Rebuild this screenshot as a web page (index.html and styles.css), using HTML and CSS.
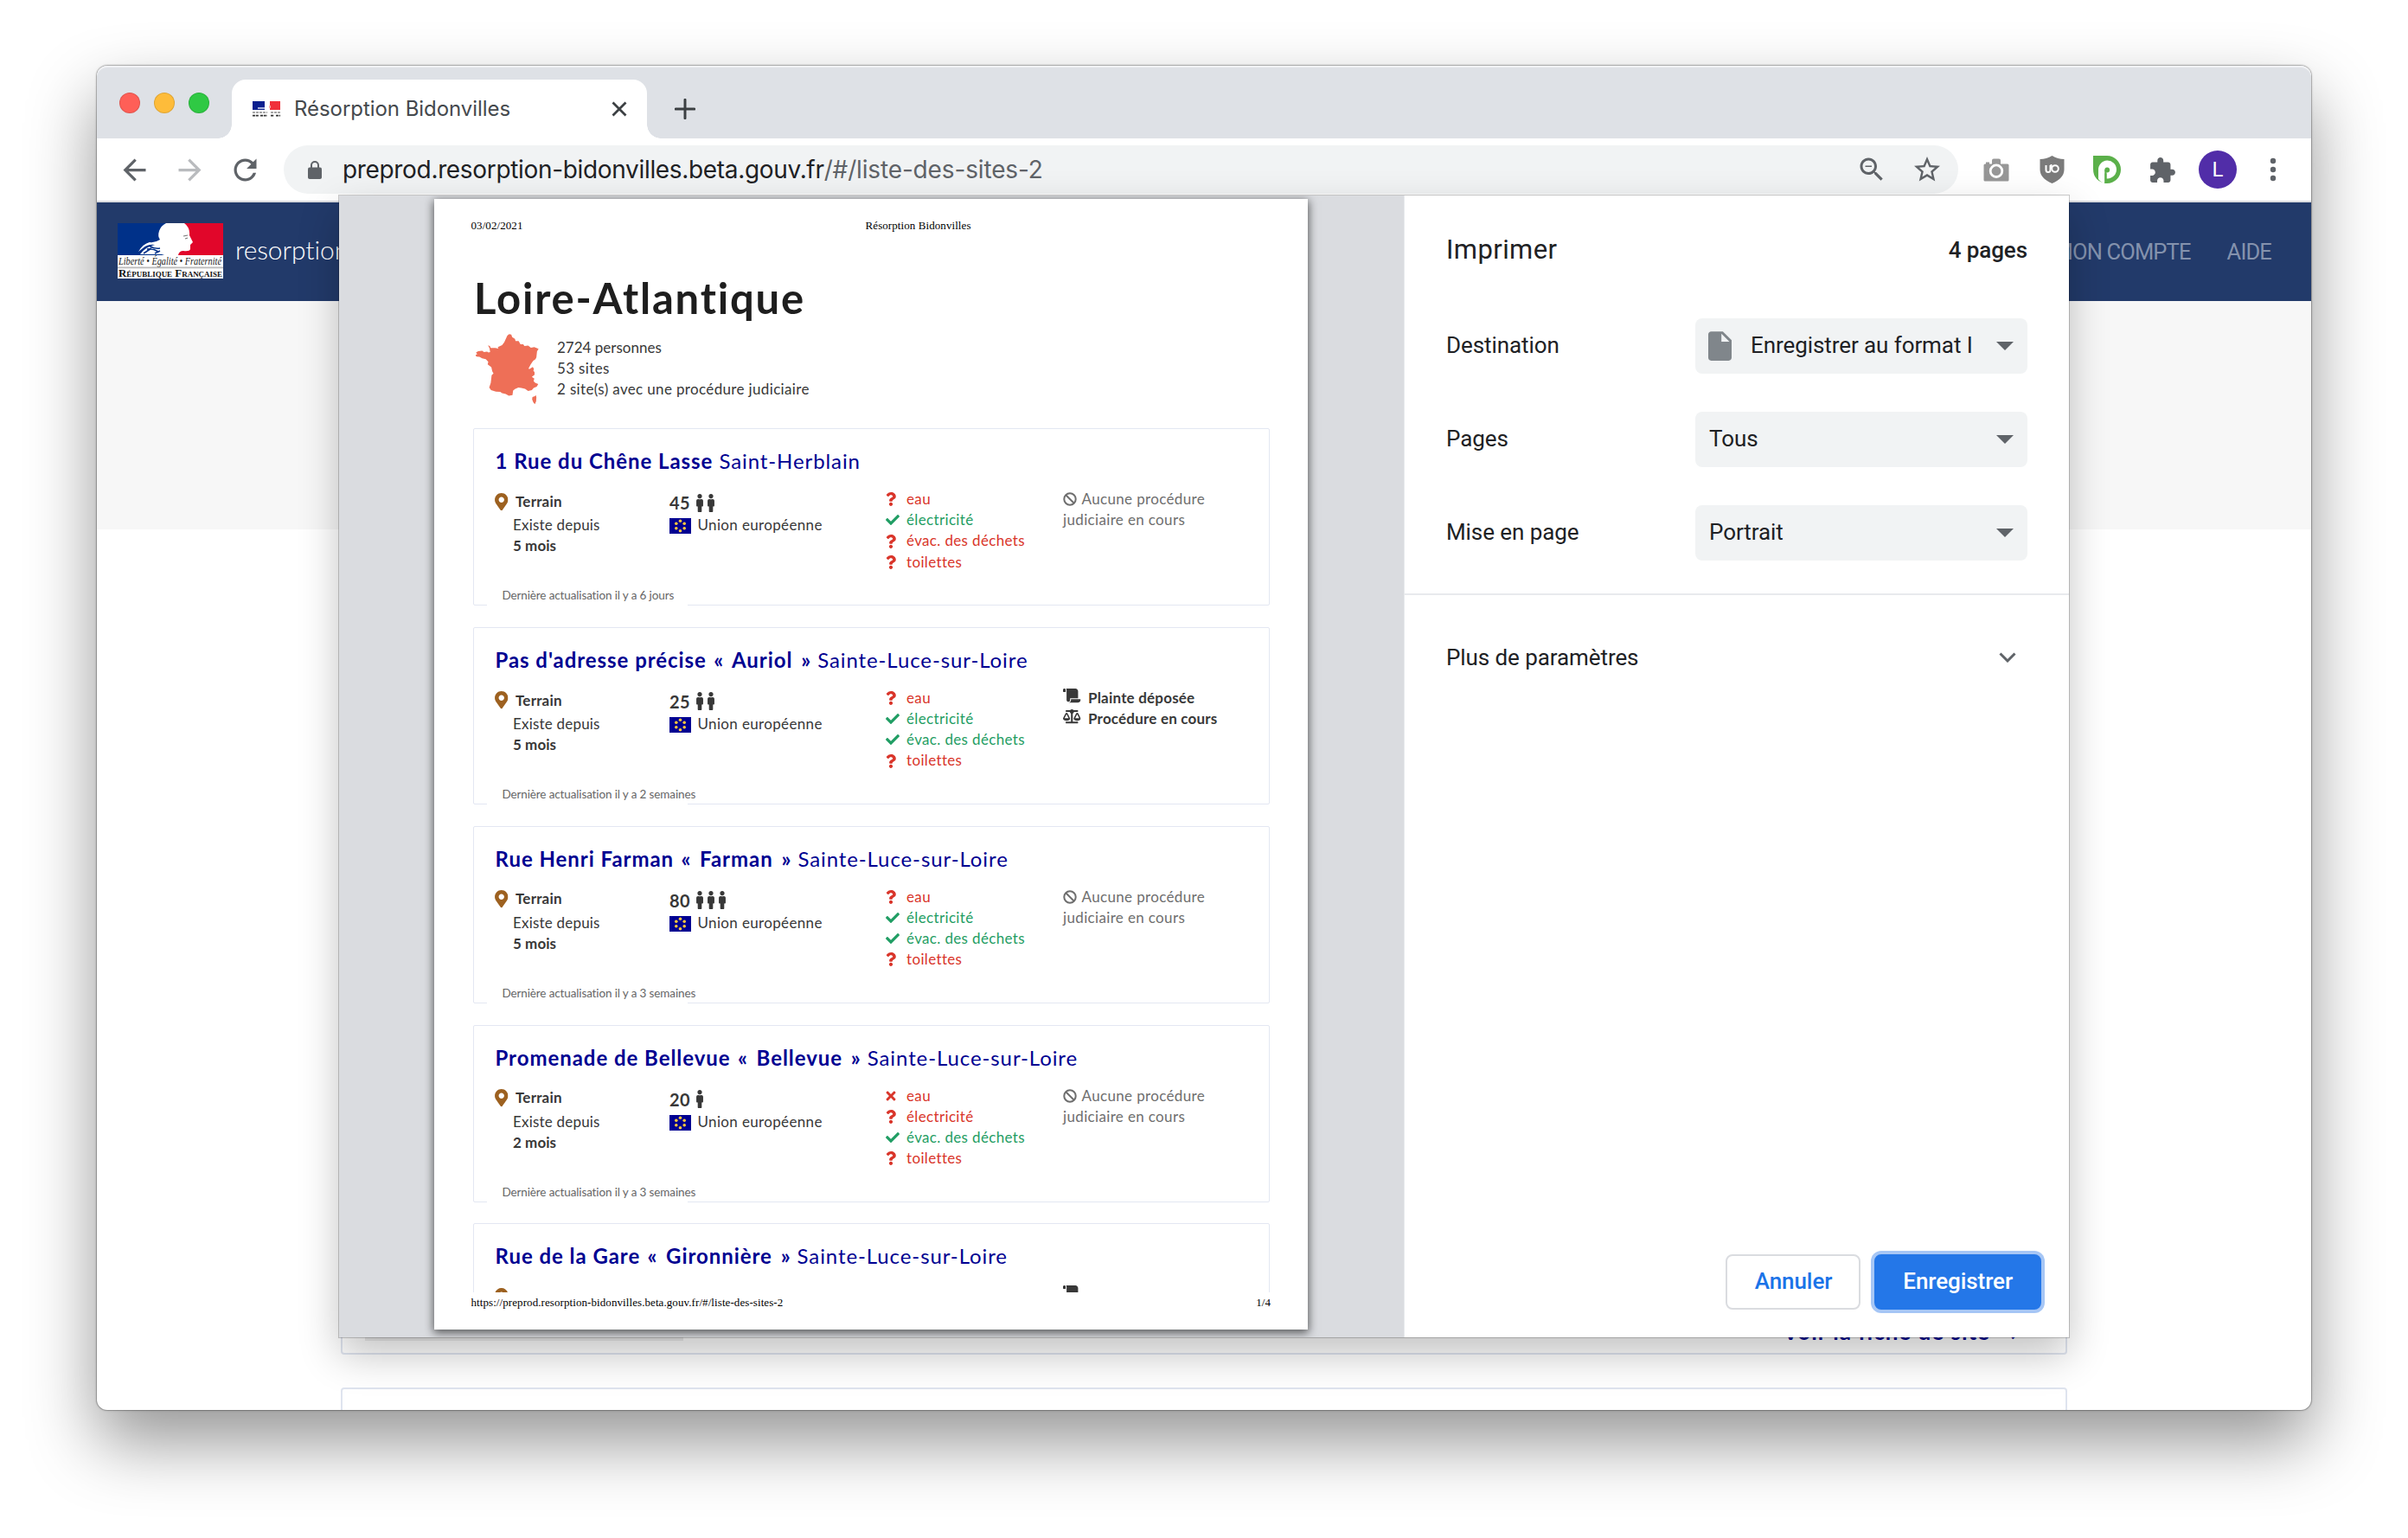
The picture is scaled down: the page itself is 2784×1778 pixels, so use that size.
FILE: index.html
```html
<!DOCTYPE html>
<html lang="fr">
<head>
<meta charset="utf-8">
<title>Résorption Bidonvilles</title>
<link rel="stylesheet" href="styles.css">
</head>
<body>
<svg class="sprite" aria-hidden="true">
  <symbol id="question" viewBox="0 0 384 512"><path d="M202.021 0C122.202 0 70.503 32.703 29.914 91.026c-7.363 10.58-5.093 25.086 5.178 32.874l43.138 32.709c10.373 7.865 25.132 6.026 33.253-4.148 25.049-31.381 43.63-49.449 82.757-49.449 30.764 0 68.816 19.799 68.816 49.631 0 22.552-18.617 34.134-48.993 51.164-35.423 19.86-82.299 44.576-82.299 106.405V320c0 13.255 10.745 24 24 24h72.471c13.255 0 24-10.745 24-24v-5.773c0-42.86 125.268-44.645 125.268-160.627C377.504 66.256 286.902 0 202.021 0zM192 373.459c-38.196 0-69.271 31.075-69.271 69.271 0 38.195 31.075 69.27 69.271 69.27s69.271-31.075 69.271-69.271-31.075-69.27-69.271-69.27z"/></symbol>
  <symbol id="check" viewBox="0 0 512 512"><path d="M173.898 439.404l-166.4-166.4c-9.997-9.997-9.997-26.206 0-36.204l36.203-36.204c9.997-9.998 26.207-9.998 36.204 0L192 312.69 432.095 72.596c9.997-9.997 26.207-9.997 36.204 0l36.203 36.204c9.997 9.997 9.997 26.206 0 36.204l-294.4 294.401c-9.998 9.997-26.207 9.997-36.204-.001z"/></symbol>
  <symbol id="times" viewBox="0 0 352 512"><path d="M242.72 256l100.07-100.07c12.28-12.28 12.28-32.19 0-44.48l-22.24-22.24c-12.28-12.28-32.19-12.28-44.48 0L176 189.28 75.93 89.21c-12.28-12.28-32.19-12.28-44.48 0L9.21 111.45c-12.28 12.28-12.28 32.19 0 44.48L109.28 256 9.21 356.07c-12.28 12.28-12.28 32.19 0 44.48l22.24 22.24c12.28 12.28 32.2 12.28 44.48 0L176 322.72l100.07 100.07c12.28 12.28 32.2 12.28 44.48 0l22.24-22.24c12.28-12.28 12.28-32.19 0-44.48L242.72 256z"/></symbol>
  <symbol id="ban" viewBox="0 0 512 512"><circle cx="256" cy="256" r="215" fill="none" stroke="currentColor" stroke-width="64"/><path d="M104 104l304 304" stroke="currentColor" stroke-width="64"/></symbol>
  <symbol id="pin" viewBox="0 0 384 512"><path d="M172.268 501.67C26.97 291.031 0 269.413 0 192 0 85.961 85.961 0 192 0s192 85.961 192 192c0 77.413-26.97 99.031-172.268 309.67-9.535 13.774-29.93 13.773-39.464 0zM192 272c44.183 0 80-35.817 80-80s-35.817-80-80-80-80 35.817-80 80 35.817 80 80 80z"/></symbol>
  <symbol id="male" viewBox="0 0 192 512"><path d="M96 0c35.346 0 64 28.654 64 64s-28.654 64-64 64-64-28.654-64-64S60.654 0 96 0m48 144h-11.36c-22.711 10.443-49.59 10.894-73.28 0H48c-26.51 0-48 21.49-48 48v136c0 13.255 10.745 24 24 24h16v136c0 13.255 10.745 24 24 24h64c13.255 0 24-10.745 24-24V352h16c13.255 0 24-10.745 24-24V192c0-26.51-21.49-48-48-48z"/></symbol>
  <symbol id="scroll" viewBox="0 0 640 512"><path d="M48 0C21.53 0 0 21.53 0 48v64c0 8.84 7.16 16 16 16h80V48C96 21.53 74.47 0 48 0zm208 412.57V352h288V96c0-52.94-43.06-96-96-96H111.59C121.74 13.41 128 29.92 128 48v368c0 38.87 34.65 69.65 74.75 63.12C234.22 474 256 444.46 256 412.57zM288 384v32c0 52.93-43.06 96-96 96h336c61.86 0 112-50.14 112-112 0-8.84-7.16-16-16-16H288z"/></symbol>
  <symbol id="balance" viewBox="0 0 640 512"><path d="M256 336h-.02c0-16.18 1.34-8.73-85.05-181.51-17.65-35.29-68.19-35.36-85.87 0C-2.06 328.75.02 320.33.02 336H0c0 44.18 57.31 80 128 80s128-35.82 128-80zM128 176l72 144H56l72-144zm511.98 160c0-16.18 1.34-8.73-85.05-181.51-17.65-35.29-68.19-35.36-85.87 0-87.12 174.26-85.04 165.84-85.04 181.51H384c0 44.18 57.31 80 128 80s128-35.82 128-80h-.02zM440 320l72-144 72 144H440zm88 128H352V153.25c23.51-10.29 41.16-31.48 46.39-57.25H528c8.84 0 16-7.16 16-16V48c0-8.84-7.16-16-16-16H383.64C369.04 12.68 346.09 0 320 0s-49.04 12.68-63.64 32H112c-8.84 0-16 7.16-16 16v32c0 8.84 7.16 16 16 16h129.61c5.23 25.76 22.87 46.96 46.39 57.25V448H112c-8.84 0-16 7.16-16 16v32c0 8.84 7.16 16 16 16h416c8.84 0 16-7.16 16-16v-32c0-8.84-7.16-16-16-16z"/></symbol>
  <symbol id="eu" viewBox="0 0 25 18"><rect width="25" height="18" fill="#000091"/><g fill="#ffc83d"><circle cx="12.5" cy="3.3" r="1.8"/><circle cx="12.5" cy="14.7" r="1.8"/><circle cx="7.8" cy="6.2" r="1.8"/><circle cx="17.2" cy="6.2" r="1.8"/><circle cx="7.8" cy="11.8" r="1.8"/><circle cx="17.2" cy="11.8" r="1.8"/></g></symbol>
</svg>

<div class="window">
  <div class="tabstrip">
    <div class="lights"><i class="light red"></i><i class="light yellow"></i><i class="light green"></i></div>
    <div class="tab">
      <svg class="favicon" viewBox="0 0 32 18"><rect width="32" height="18" fill="#fff"/><rect width="14" height="10" fill="#0b1f8f"/><rect x="20" width="12" height="10" fill="#f0303a"/><path d="M6 7h8v2H6z" fill="#aab2dc"/><path d="M19 5h2v3h-2z" fill="#f7a5a8"/><path d="M0 13h17M21 13h11" stroke="#888" stroke-width="1.5" stroke-dasharray="3 1"/><path d="M0 16.7h7M9 16.7h8M21 16.7h4M27 16.7h5" stroke="#333" stroke-width="1.8" stroke-dasharray="3 .8"/></svg>
      <span class="tab-title">Résorption Bidonvilles</span>
      <svg class="tab-close" viewBox="0 0 18 18"><path d="M1.5 1.5l15 15M16.5 1.5l-15 15" stroke="#3c4043" stroke-width="2.8"/></svg>
    </div>
    <svg class="new-tab" viewBox="0 0 24 24"><path d="M12 1.3v21.4M1.3 12h21.4" stroke="#3c4043" stroke-width="3" stroke-linecap="round"/></svg>
  </div>

  <div class="toolbar">
    <svg class="nav-icon" viewBox="0 0 24 24"><path d="M20 11H7.83l5.59-5.59L12 4l-8 8 8 8 1.41-1.41L7.83 13H20v-2z"/></svg>
    <svg class="nav-icon faded" viewBox="0 0 24 24"><path d="M4 11h12.17l-5.59-5.59L12 4l8 8-8 8-1.41-1.41L16.17 13H4v-2z"/></svg>
    <svg class="nav-icon" viewBox="0 0 24 24"><path d="M17.65 6.35C16.2 4.9 14.21 4 12 4c-4.42 0-7.99 3.58-7.99 8s3.57 8 7.99 8c3.73 0 6.84-2.55 7.73-6h-2.08c-.82 2.33-3.04 4-5.65 4-3.31 0-6-2.69-6-6s2.69-6 6-6c1.66 0 3.14.69 4.22 1.78L13 11h7V4l-2.35 2.35z"/></svg>
    <div class="omnibox">
      <svg class="lock" viewBox="4 1 16 21"><path d="M18 8.5H6a2 2 0 0 0-2 2V20c0 1.1.9 2 2 2h12c1.100 0 2-.9 2-2v-9.500a2 2 0 0 0-2-2z"/><path d="M8 9V6a4 4 0 0 1 8 0v3" fill="none" stroke="#5f6368" stroke-width="2"/></svg>
      <div class="url"><span class="domain">preprod.resorption-bidonvilles.beta.gouv.fr</span><span class="path">/#/liste-des-sites-2</span></div>
      <div class="slot"><svg class="i36" viewBox="0 0 24 24"><path d="M15.500 14h-.79l-.28-.27C15.410 12.590 16 11.110 16 9.500 16 5.910 13.090 3 9.500 3S3 5.910 3 9.500 5.910 16 9.500 16c1.610 0 3.090-.59 4.230-1.570l.27.28v.79l5 4.990L20.490 19l-4.990-5zm-6 0C7.010 14 5 11.990 5 9.500S7.010 5 9.500 5 14 7.010 14 9.500 11.990 14 9.500 14zM7 9h5v1H7z"/></svg></div>
      <div class="slot"><svg class="i36" viewBox="0 0 24 24"><path d="M22 9.240l-7.190-.62L12 2 9.190 8.630 2 9.240l5.460 4.730L5.820 21 12 17.270 18.180 21l-1.630-7.030L22 9.240zM12 15.400l-3.760 2.270 1-4.280-3.320-2.880 4.380-.38L12 6.100l1.710 4.040 4.380.38-3.320 2.880 1 4.280L12 15.400z"/></svg></div>
    </div>
    <div class="extensions">
      <div class="slot"><svg width="30" height="27" viewBox="0 0 30 27"><path fill="#979797" d="M3 6.500V4.500h4v2h3V2.500Q10 .5 12 .5h6q2 0 2 2v4h8q1.500 0 1.500 1.500v17q0 1.500-1.500 1.500H2Q.5 26.500.5 25V8Q.5 6.500 2 6.500z"/><circle cx="15" cy="14.700" r="6.800" fill="none" stroke="#fff" stroke-width="2.800"/></svg></div>
      <div class="slot"><svg width="29" height="32" viewBox="0 0 29 32"><path fill="#7b7b7b" d="M14.500 0Q21 4 28.500 4v12q0 10-14 16Q.5 26 .5 16V4Q8 4 14.500 0z"/><path d="M7.500 11v5.500a2.500 2.500 0 0 0 5 0V11" fill="none" stroke="#fff" stroke-width="2"/><circle cx="18" cy="15" r="3.800" fill="none" stroke="#fff" stroke-width="2"/><path d="M13.500 10v5" stroke="#fff" stroke-width="2"/></svg></div>
      <div class="slot"><svg width="32" height="32" viewBox="0 0 32 32"><path fill="#5bb04a" d="M0 0h16a16 16 0 0 1 0 32h-3V0z"/><path fill="#5bb04a" d="M0 0h16v32Q0 30 0 15z"/><path fill="#fff" d="M6 27V16.500a10.500 10.500 0 1 1 10.500 10h-1V20.500h-2V32Q9 31 6 27z"/><circle cx="16.200" cy="16.500" r="2.900" fill="#5bb04a"/><path fill="#5bb04a" d="M13.300 16.500h2.200V32h-2.200z"/></svg></div>
      <div class="slot"><svg class="i33" viewBox="0.500 -.5 24 24"><path d="M20.500 11H19V7c0-1.100-.9-2-2-2h-4V3.500C13 2.120 11.880 1 10.500 1S8 2.120 8 3.500V5H4c-1.100 0-1.990.9-1.990 2v3.800H3.500c1.490 0 2.700 1.210 2.700 2.700s-1.210 2.700-2.700 2.700H2V20c0 1.100.9 2 2 2h3.800v-1.500c0-1.490 1.210-2.700 2.700-2.700 1.490 0 2.700 1.210 2.700 2.700V22H17c1.100 0 2-.9 2-2v-4h1.500c1.380 0 2.500-1.120 2.500-2.500S21.880 11 20.500 11z"/></svg></div>
      <div class="slot"><span class="avatar">L</span></div>
      <div class="slot"><svg width="8" height="28" viewBox="0 0 8 28"><circle cx="4" cy="4" r="3.200"/><circle cx="4" cy="14" r="3.200"/><circle cx="4" cy="24" r="3.200"/></svg></div>
    </div>
  </div>

  <div class="site-nav">
    <svg class="rf-logo" viewBox="0 0 122 64">
      <rect width="122" height="64" fill="#fff"/>
      <path fill="#003189" d="M0 0h56q-6 3-8 9-2 6 1 10-6 4-12 3-8 2-13 11l5-4q6-5 14-4-12 3-17 11h28l-3 1H0z"/>
      <path fill="#e1062a" d="M77 0h45v37H70q1-5 6-5 7 1 8-2v-5l3-3-4-8q1-9-6-14z"/>
      <path fill="none" stroke="#003189" stroke-width="1.600" d="M34 30q7-1 13 3M36 26q6 4 13 3M30 35l9-6M43 35l6-3"/>
      <path fill="none" stroke="#777" stroke-width="1.200" d="M76 15l5-1M78 18l3-1"/>
      <text x="1" y="48" class="rf-motto" textLength="119" lengthAdjust="spacingAndGlyphs">Liberté • Égalité • Fraternité</text>
      <rect y="50.500" width="122" height="1.800" fill="#bbb"/>
      <text x="1" y="62" class="rf-name" textLength="120" lengthAdjust="spacingAndGlyphs">République Française</text>
    </svg>
    <span class="site-name">resorption-bidonvilles</span>
    <div class="site-links"><span>MON COMPTE</span><span>AIDE</span></div>
  </div>

  <div class="page">
    <div class="hero"></div>
    <div class="page-card first"><span class="band">Dernière actualisation il y a 6 jours</span><span class="more">Voir la fiche de site<span class="arrow">→</span></span></div>
    <div class="page-card"></div>
  </div>

  <div class="dialog">
    <div class="preview">
      <div class="paper">
        <div class="paper-head"><span>03/02/2021</span><span>Résorption Bidonvilles</span></div>
        <div class="doc">
          <h1>Loire-Atlantique</h1>
          <div class="summary">
            <svg class="france" viewBox="165 497 206 247" preserveAspectRatio="none"><path d="M268 503l6-5 7 1 3 9 9 6 2 8 10 0 6 11 9 0 4 6 12-1 9 7 11-2 14 6-5 9-2 20-3 7-8 6-8 13-7 14 4 1 10-7 4 7-2 6 4 5 0 9-9 8 8 5-2 10 5 5 10 5-5 9-10 4-6 8-12 3-10-8-12-3-10-1-11 5-6 5-2 16-12 2-10-6-12-3-6-4-14-1-16-5-6-9 5-16 3-27 6-6-4-8-3-14-12-10 2-9-8-9-12-3-9-5-9-1-5-5 7-3-4-6 7-5 13-1 6 4 10-1 5 3 5-2-2-13-5-10 6 2 3 7 15 0 10 2-2-5 14-7 7-10zM361 710l2 8-1 14-4 10-5-6-4-11 1-8 8-3z"/></svg>
            <div class="lines"><div class="total">2724 personnes</div><div>53 sites</div><div>2 site(s) avec une procédure judiciaire</div></div>
          </div>

          <div class="card">
            <h2><b>1 Rue du Chêne Lasse</b> Saint-Herblain</h2>
            <div class="cols">
              <div class="place"><div class="kind"><svg><use href="#pin"/></svg>Terrain</div><div>Existe depuis</div><div><b>5 mois</b></div></div>
              <div class="people"><div class="count">45<svg><use href="#male"/></svg><svg><use href="#male"/></svg></div><div class="origin"><svg><use href="#eu"/></svg>Union européenne</div></div>
              <ul class="services"><li class="no"><svg class="q"><use href="#question"/></svg>eau</li><li class="yes"><svg><use href="#check"/></svg>électricité</li><li class="no"><svg class="q"><use href="#question"/></svg>évac. des déchets</li><li class="no"><svg class="q"><use href="#question"/></svg>toilettes</li></ul>
              <div class="justice none"><div><svg><use href="#ban"/></svg>Aucune procédure</div><div>judiciaire en cours</div></div>
            </div>
            <div class="updated">Dernière actualisation il y a 6 jours</div>
          </div>

          <div class="card">
            <h2><b>Pas d'adresse précise <span class="alias">« Auriol »</span></b> Sainte-Luce-sur-Loire</h2>
            <div class="cols">
              <div class="place"><div class="kind"><svg><use href="#pin"/></svg>Terrain</div><div>Existe depuis</div><div><b>5 mois</b></div></div>
              <div class="people"><div class="count">25<svg><use href="#male"/></svg><svg><use href="#male"/></svg></div><div class="origin"><svg><use href="#eu"/></svg>Union européenne</div></div>
              <ul class="services"><li class="no"><svg class="q"><use href="#question"/></svg>eau</li><li class="yes"><svg><use href="#check"/></svg>électricité</li><li class="yes"><svg><use href="#check"/></svg>évac. des déchets</li><li class="no"><svg class="q"><use href="#question"/></svg>toilettes</li></ul>
              <div class="justice open"><div><svg><use href="#scroll"/></svg>Plainte déposée</div><div><svg><use href="#balance"/></svg>Procédure en cours</div></div>
            </div>
            <div class="updated">Dernière actualisation il y a 2 semaines</div>
          </div>

          <div class="card">
            <h2><b>Rue Henri Farman <span class="alias">« Farman »</span></b> Sainte-Luce-sur-Loire</h2>
            <div class="cols">
              <div class="place"><div class="kind"><svg><use href="#pin"/></svg>Terrain</div><div>Existe depuis</div><div><b>5 mois</b></div></div>
              <div class="people"><div class="count">80<svg><use href="#male"/></svg><svg><use href="#male"/></svg><svg><use href="#male"/></svg></div><div class="origin"><svg><use href="#eu"/></svg>Union européenne</div></div>
              <ul class="services"><li class="no"><svg class="q"><use href="#question"/></svg>eau</li><li class="yes"><svg><use href="#check"/></svg>électricité</li><li class="yes"><svg><use href="#check"/></svg>évac. des déchets</li><li class="no"><svg class="q"><use href="#question"/></svg>toilettes</li></ul>
              <div class="justice none"><div><svg><use href="#ban"/></svg>Aucune procédure</div><div>judiciaire en cours</div></div>
            </div>
            <div class="updated">Dernière actualisation il y a 3 semaines</div>
          </div>

          <div class="card">
            <h2><b>Promenade de Bellevue <span class="alias">« Bellevue »</span></b> Sainte-Luce-sur-Loire</h2>
            <div class="cols">
              <div class="place"><div class="kind"><svg><use href="#pin"/></svg>Terrain</div><div>Existe depuis</div><div><b>2 mois</b></div></div>
              <div class="people"><div class="count">20<svg><use href="#male"/></svg></div><div class="origin"><svg><use href="#eu"/></svg>Union européenne</div></div>
              <ul class="services"><li class="no"><svg class="q"><use href="#times"/></svg>eau</li><li class="no"><svg class="q"><use href="#question"/></svg>électricité</li><li class="yes"><svg><use href="#check"/></svg>évac. des déchets</li><li class="no"><svg class="q"><use href="#question"/></svg>toilettes</li></ul>
              <div class="justice none"><div><svg><use href="#ban"/></svg>Aucune procédure</div><div>judiciaire en cours</div></div>
            </div>
            <div class="updated">Dernière actualisation il y a 3 semaines</div>
          </div>

          <div class="card">
            <h2><b>Rue de la Gare <span class="alias">« Gironnière »</span></b> Sainte-Luce-sur-Loire</h2>
            <div class="cols">
              <div class="place"><div class="kind"><svg><use href="#pin"/></svg></div></div>
              <div></div>
              <div></div>
              <div class="justice open"><div><svg><use href="#scroll"/></svg></div></div>
            </div>
          </div>
        </div>
        <div class="paper-foot"><span>https://preprod.resorption-bidonvilles.beta.gouv.fr/#/liste-des-sites-2</span><span>1/4</span></div>
      </div>
    </div>

    <div class="panel">
      <div class="panel-head"><span class="panel-title">Imprimer</span><span class="panel-count">4 pages</span></div>
      <div class="settings">
        <div class="setting"><span class="label">Destination</span><div class="select"><svg class="file" viewBox="4 2 16 20"><path d="M6 2c-1.100 0-1.990.9-1.990 2L4 20c0 1.100.89 2 1.990 2H18c1.100 0 2-.9 2-2V8l-6-6H6zm7 7V3.500L18.500 9H13z"/></svg><span class="value">Enregistrer au format I</span><i class="caret"></i></div></div>
        <div class="setting"><span class="label">Pages</span><div class="select"><span class="value">Tous</span><i class="caret"></i></div></div>
        <div class="setting"><span class="label">Mise en page</span><div class="select"><span class="value">Portrait</span><i class="caret"></i></div></div>
      </div>
      <div class="more-settings"><span>Plus de paramètres</span><svg width="20" height="12" viewBox="0 0 20 12"><path d="M1.500 1.500l8.500 8.500 8.500-8.500" fill="none" stroke="#5f6368" stroke-width="3"/></svg></div>
      <div class="actions"><span class="button">Annuler</span><span class="button primary">Enregistrer</span></div>
    </div>
  </div>
</div>
</body>
</html>
```
FILE: styles.css
```css
* { box-sizing: border-box; }
body {
  margin: 0;
  padding: 76px 112px 0;
  height: 1778px;
  overflow: hidden;
  background: #fff;
  font-family: Lato, sans-serif;
}
svg { display: block; flex: none; }
.sprite { position: absolute; width: 0; height: 0; }

.window {
  position: relative;
  display: flex;
  flex-direction: column;
  width: 2560px;
  height: 1554px;
  border-radius: 12px;
  background: #fff;
  box-shadow: 0 0 0 1px rgba(0, 0, 0, .17), 0 0 3px rgba(0, 0, 0, .35), 0 37px 79px rgba(0, 0, 0, .42);
}

/* Tab strip */
.tabstrip {
  display: flex;
  height: 84px;
  padding: 16px 0 0 26px;
  background: #dee1e6;
  border-radius: 12px 12px 0 0;
  box-shadow: inset 0 2px 1px rgba(255, 255, 255, .6);
}
.lights { display: flex; gap: 16px; padding-top: 15px; width: 130px; }
.light { width: 24px; height: 24px; border-radius: 50%; border: 1px solid rgba(0, 0, 0, .12); }
.red { background: #ff5f57; }
.yellow { background: #febc3a; }
.green { background: #2fc944; }
.tab {
  position: relative;
  display: flex;
  align-items: center;
  width: 480px;
  height: 68px;
  padding: 0 23px 0 24px;
  background: #fff;
  border-radius: 16px 16px 0 0;
}
.tab::before, .tab::after {
  content: "";
  position: absolute;
  bottom: 0;
  width: 16px;
  height: 16px;
}
.tab::before { left: -16px; background: radial-gradient(circle at 0 0, transparent 15.500px, #fff 16px); }
.tab::after { right: -16px; background: radial-gradient(circle at 100% 0, transparent 15.500px, #fff 16px); }
.favicon { width: 32px; height: 18px; }
.tab-title {
  flex: 1;
  margin-left: 16px;
  font: 24px/30px Inter, sans-serif;
  letter-spacing: -.05px;
  color: #45494d;
}
.tab-close { width: 18px; height: 18px; }
.new-tab { width: 24px; height: 24px; margin: 22px 0 0 32px; }

/* Toolbar */
.toolbar {
  display: flex;
  align-items: center;
  gap: 25px;
  height: 74px;
  padding-left: 24px;
  border-bottom: 2px solid #dadce0;
  background: #fff;
  fill: #5f6368;
}
.nav-icon { width: 39px; height: 39px; }
.faded { fill: #b9bbbe; }
.omnibox {
  display: flex;
  align-items: center;
  flex: none;
  width: 1936px;
  height: 56px;
  padding: 0 4px 0 28px;
  border-radius: 28px;
  background: #f1f3f4;
}
.lock { width: 16px; height: 21px; }
.url { flex: 1; margin-left: 24px; font: 28px/40px Inter, sans-serif; white-space: nowrap; }
.domain { color: #202124; letter-spacing: -.33px; }
.path { color: #5f6368; letter-spacing: -.15px; }
.slot { display: flex; align-items: center; justify-content: center; width: 64px; height: 56px; }
.i36 { width: 36px; height: 36px; }
.i33 { width: 33px; height: 33px; }
.extensions { display: flex; flex: none; margin-left: -13px; }
.avatar {
  width: 44px;
  height: 44px;
  border-radius: 50%;
  background: #512da8;
  color: #fff;
  font: 24px/44px Roboto, sans-serif;
  text-align: center;
}

/* Site behind the dialog */
.site-nav {
  display: flex;
  align-items: center;
  height: 114px;
  padding: 0 46px 0 24px;
  background: #223a6a;
}
.rf-logo { width: 122px; height: 64px; margin-bottom: 2px; }
.rf-motto { font: italic 12.500px "Liberation Serif", serif; fill: #222; }
.rf-name { font: bold 13px "Liberation Serif", serif; font-variant: small-caps; fill: #111; }
.site-name { margin: 0 0 6px 14px; font-size: 30px; font-weight: 300; line-height: 40px; letter-spacing: -.1px; color: #fff; }
.site-links {
  display: flex;
  gap: 42px;
  margin-left: auto;
  font: 25.500px/36px Roboto, sans-serif;
  letter-spacing: -.85px;
  color: #8492ad;
}
.page { flex: 1; overflow: hidden; border-radius: 0 0 12px 12px; }
.hero { height: 264px; background: #f7f7f7; }
.page-card {
  width: 1996px;
  height: 200px;
  margin: 38px 0 0 282px;
  border: 2px solid #dfe4ef;
  border-radius: 4px;
}
.page-card.first {
  display: flex;
  justify-content: space-between;
  align-items: flex-end;
  height: 866px;
  margin-top: 88px;
  padding: 0 51px 14px 26px;
}
.band { width: 368px; height: 40px; padding-left: 24px; background: #ececec; font-size: 24px; line-height: 30px; color: #555; white-space: nowrap; }
.more { display: flex; gap: 9px; font-size: 26px; font-weight: bold; letter-spacing: 1px; line-height: 22px; color: #000091; }

/* Print dialog */
.dialog {
  position: absolute;
  left: 280px;
  top: 150px;
  display: flex;
  width: 2000px;
  height: 1320px;
  background: #fff;
  box-shadow: 0 0 0 1px rgba(0, 0, 0, .2), 0 20px 44px rgba(0, 0, 0, .24);
}
.preview {
  width: 1232px;
  padding: 4px 0 0 110px;
  overflow: hidden;
  background: #dadce0;
  border-right: 1px solid #e8eaed;
}
.paper {
  display: flex;
  flex-direction: column;
  width: 1010px;
  height: 1307px;
  padding: 23px 43px 0 42.500px;
  background: #fff;
  box-shadow: 0 3px 10px 1px rgba(0, 0, 0, .6);
}
.paper-head, .paper-foot {
  display: flex;
  justify-content: space-between;
  height: 16px;
  font: 13px/16px "Liberation Serif", serif;
  letter-spacing: .08px;
  color: #000;
}
.paper-head { justify-content: flex-start; gap: 396px; }
.paper-foot { margin-top: 3.500px; }
.doc {
  height: 1225px;
  padding: 47px 0 0 2.500px;
  overflow: hidden;
  font-size: 17px;
  line-height: 24.200px;
  letter-spacing: .35px;
  color: #383838;
}
.doc h1 {
  margin: 0 0 13.500px 1px;
  font-size: 49px;
  line-height: 56px;
  letter-spacing: 1.800px;
  color: #1e1e1e;
}
.summary { display: flex; gap: 21px; height: 109.500px; padding-left: 3px; }
.france { width: 73px; height: 82px; fill: #ee6f57; }
.lines { padding-top: 4.500px; }
.total { letter-spacing: 0; }
.card {
  display: flex;
  flex-direction: column;
  width: 920.500px;
  height: 205px;
  margin-bottom: 24.850px;
  border: 1px solid #e3e7f2;
  border-radius: 2px;
}
.card h2 {
  margin: 22px 0 17px 24.500px;
  font-size: 24px;
  font-weight: 400;
  line-height: 30px;
  letter-spacing: .9px;
  color: #000091;
}
.card h2 b { letter-spacing: .95px; }
.alias { word-spacing: 3px; margin-left: 1.500px; }
.cols { display: grid; grid-template-columns: 202px 250px 205px 220px; margin-left: 24px; }
.place { padding: 2.700px 0 0 21px; }
.kind { display: flex; align-items: center; gap: 8.500px; height: 24.200px; margin: 0 0 3.300px -21px; font-weight: bold; letter-spacing: .2px; }
.kind svg { width: 15.500px; height: 20.500px; fill: #9d6120; }
.place > div:nth-child(2) { letter-spacing: .2px; }
.place > div:nth-child(3) { letter-spacing: .05px; }
.count { display: flex; align-items: center; gap: 4.800px; height: 24.200px; margin: 4px 0 2px; font-size: 20px; font-weight: bold; letter-spacing: .4px; }
.count svg { width: 8px; height: 21px; fill: #383838; }
.count svg:first-of-type { margin-left: 2.500px; }
.origin { display: flex; align-items: center; gap: 7.500px; }
.origin svg { width: 25px; height: 18px; margin-top: 2px; }
.services { margin: 0; padding: 0; list-style: none; }
.services li { display: flex; align-items: center; gap: 8px; }
.services svg { width: 16px; height: 16px; fill: currentColor; }
.services .q { width: 12px; margin-right: 4px; }
.no { color: #d9352a; }
.yes { color: #1f9d63; }
.justice > div { display: flex; align-items: center; height: 24.200px; }
.justice svg { fill: currentColor; }
.none { color: #6e6e6e; }
.none svg { width: 16px; height: 16px; margin-right: 5.500px; }
.open { font-weight: bold; letter-spacing: .2px; }
.open svg { width: 20.500px; height: 16.400px; margin: 0 8.500px 5px 0; }
.updated {
  align-self: flex-start;
  width: 232px;
  height: 22px;
  margin: auto 0 -1px 15px;
  padding-left: 17.500px;
  background: #fff;
  font-size: 13.500px;
  line-height: 21px;
  letter-spacing: -.13px;
  color: #666;
  white-space: nowrap;
}

/* Settings column */
.panel {
  flex: 1;
  display: flex;
  flex-direction: column;
  font: 26px/40px Roboto, sans-serif;
  letter-spacing: -.08px;
  color: #202124;
}
.panel-head { display: flex; justify-content: space-between; padding: 43px 48px 0; }
.panel-title { font-size: 31px; letter-spacing: .4px; }
.panel-count { font-weight: 500; }
.settings { display: grid; gap: 44px; padding: 59px 48px 38px; border-bottom: 2px solid #e8eaed; }
.setting { display: flex; justify-content: space-between; align-items: center; height: 64px; }
.label { margin-bottom: 2px; }
.select {
  display: flex;
  align-items: center;
  width: 384px;
  height: 64px;
  padding: 0 16px;
  border-radius: 8px;
  background: #f1f3f4;
}
.file { width: 27px; height: 34px; margin: 0 22px 0 -1px; fill: #80868b; }
.value { flex: 1; margin-bottom: 2px; white-space: nowrap; overflow: hidden; }
.caret { border: 10px solid transparent; border-top-color: #5f6368; border-bottom: 0; }
.more-settings { display: flex; justify-content: space-between; align-items: center; height: 144px; padding: 0 61px 0 48px; }
.actions { display: flex; justify-content: flex-end; gap: 16px; margin-top: auto; padding: 0 32px 32px; }
.button {
  height: 64px;
  padding: 0 31px 0 32px;
  border: 2px solid #dadce0;
  border-radius: 8px;
  font-weight: 500;
  line-height: 59px;
  color: #1a73e8;
}
.button.primary { padding: 0 31px; border-color: #2477e8; background: #2477e8; color: #fff; box-shadow: 0 0 0 4px #a6c6f5; }
```
